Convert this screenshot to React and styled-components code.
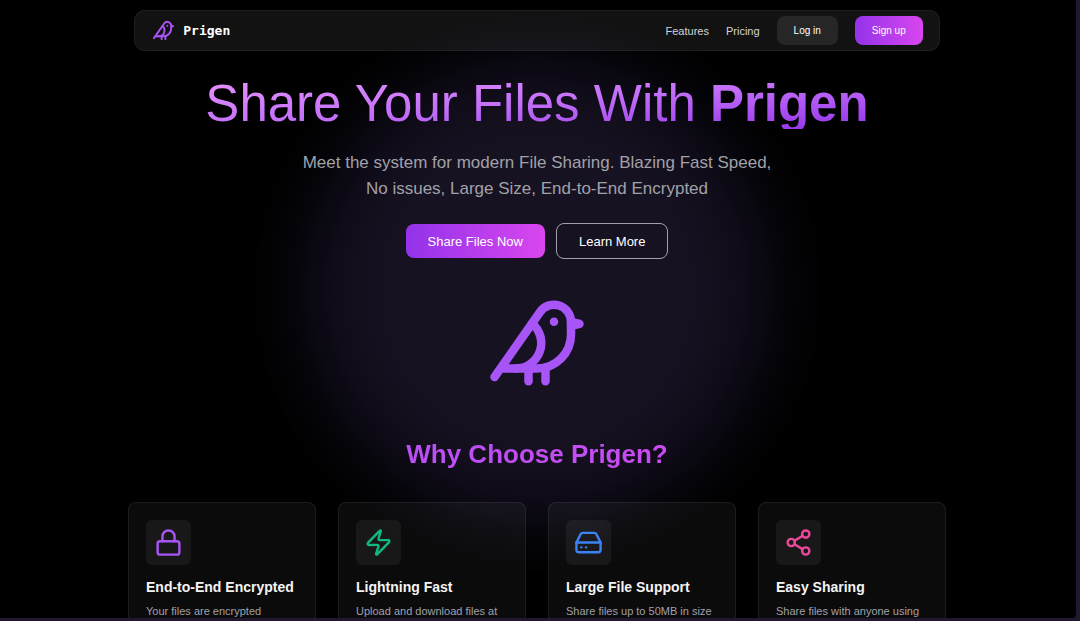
import React from "react";
import styled, { createGlobalStyle } from "styled-components";
import { Bird, HardDrive, Lock, Share2, Zap } from "lucide-react";

const features = [
  {
    title: "End-to-End Encrypted",
    text: "Your files are encrypted",
    icon: Lock,
    color: "#a855f7",
  },
  {
    title: "Lightning Fast",
    text: "Upload and download files at",
    icon: Zap,
    color: "#10b981",
  },
  {
    title: "Large File Support",
    text: "Share files up to 50MB in size",
    icon: HardDrive,
    color: "#3b82f6",
  },
  {
    title: "Easy Sharing",
    text: "Share files with anyone using",
    icon: Share2,
    color: "#ec4899",
  },
];

export default function App() {
  return (
    <Frame>
      <GlobalStyle />
      <Screen>
        <Navbar>
          <Brand href="#">
            <Bird size={23} color="#a855f7" />
            <span>Prigen</span>
          </Brand>
          <NavLinks>
            <NavLink href="#features">Features</NavLink>
            <NavLink href="#pricing">Pricing</NavLink>
            <NavButton type="button">Log in</NavButton>
            <NavButton type="button" $primary>
              Sign up
            </NavButton>
          </NavLinks>
        </Navbar>

        <Hero>
          <h1>
            Share Your Files With <strong>Prigen</strong>
          </h1>
          <p>
            Meet the system for modern File Sharing. Blazing Fast Speed, No
            issues, Large Size, End-to-End Encrypted
          </p>
          <Actions>
            <ActionButton type="button" $primary>
              Share Files Now
            </ActionButton>
            <ActionButton type="button">Learn More</ActionButton>
          </Actions>
          <Bird size={102} color="#a855f7" />
        </Hero>

        <Features id="features">
          <h2>Why Choose Prigen?</h2>
          <CardGrid>
            {features.map(({ title, text, icon: Icon, color }) => (
              <Card key={title}>
                <IconBox>
                  <Icon size={29} color={color} />
                </IconBox>
                <h3>{title}</h3>
                <p>{text}</p>
              </Card>
            ))}
          </CardGrid>
        </Features>
      </Screen>
    </Frame>
  );
}

const GlobalStyle = createGlobalStyle`
  *, *::before, *::after {
    box-sizing: border-box;
  }
  body {
    margin: 0;
    background-color: #21182f;
    font-family: "Liberation Sans", Arial, sans-serif;
  }
  h1, h2, h3, p {
    margin: 0;
  }
  button {
    font-family: inherit;
    cursor: pointer;
  }
`;

const Frame = styled.div`
  height: 100vh;
  padding: 0 4px 3px 0;
  background-color: #21182f;
`;

const Screen = styled.div`
  height: 100%;
  padding: 10px 2px 0 0;
  display: flex;
  flex-direction: column;
  align-items: center;
  overflow: hidden;
  border-bottom-right-radius: 4px;
  background: radial-gradient(
      circle at 50% 290px,
      #171221 0,
      #171221 145px,
      #130f1d 180px,
      #0f0b18 206px,
      #0a0811 226px,
      #050409 248px,
      #020204 268px,
      #010102 282px,
      #000000 284px
    )
    #000000;
`;

const Navbar = styled.nav`
  width: 75%;
  max-width: 1130px;
  padding: 5px 16px 5px 17px;
  display: flex;
  align-items: center;
  justify-content: space-between;
  flex-shrink: 0;
  background-color: #ffffff12;
  border: 1px solid #ffffff0d;
  border-radius: 11px;
`;

const Brand = styled.a`
  display: flex;
  align-items: center;
  gap: 8px;
  color: #ffffff;
  font-family: "DejaVu Sans Mono", monospace;
  font-size: 13px;
  font-weight: 700;
  text-decoration: none;
`;

const NavLinks = styled.div`
  display: flex;
  align-items: center;
  gap: 17px;
`;

const NavLink = styled.a`
  color: #d4d4d8;
  font-size: 11px;
  text-decoration: none;
`;

const NavButton = styled.button`
  height: 29px;
  padding: 0 17px;
  border: none;
  border-radius: 8px;
  color: #ffffff;
  font-size: 10px;
  background: ${({ $primary }) =>
    $primary ? "linear-gradient(to right, #9333ea, #d946ef)" : "#262626"};
`;

const Hero = styled.section`
  padding-top: 27px;
  display: flex;
  flex-direction: column;
  align-items: center;
  flex-shrink: 0;
  text-align: center;
  h1 {
    font-size: 51px;
    line-height: 51px;
    font-weight: 400;
    color: transparent;
    background: linear-gradient(to bottom right, #e894ff, #c26ef9, #9333ea);
    background-clip: text;
    -webkit-background-clip: text;
  }
  p {
    max-width: 480px;
    margin-top: 21px;
    color: #a1a1aa;
    font-size: 17px;
    line-height: 26px;
  }
  > svg {
    margin-top: 33px;
  }
`;

const Actions = styled.div`
  margin-top: 21px;
  display: flex;
  align-items: center;
  gap: 11px;
`;

const ActionButton = styled.button`
  height: ${({ $primary }) => ($primary ? "34px" : "36px")};
  padding: 0 22px;
  border: ${({ $primary }) => ($primary ? "none" : "1px solid #a1a1aa")};
  border-radius: 8px;
  color: #ffffff;
  font-size: 13px;
  background: ${({ $primary }) =>
    $primary ? "linear-gradient(to right, #9333ea, #d946ef)" : "transparent"};
`;

const Features = styled.section`
  width: 100%;
  max-width: 818px;
  padding-top: 45px;
  h2 {
    color: transparent;
    font-size: 26px;
    line-height: 30px;
    font-weight: 700;
    text-align: center;
    background: linear-gradient(to right, #a855f7, #d946ef);
    background-clip: text;
    -webkit-background-clip: text;
  }
`;

const CardGrid = styled.div`
  margin-top: 33px;
  display: grid;
  grid-template-columns: repeat(4, 1fr);
  gap: 22px;
`;

const Card = styled.article`
  min-height: 160px;
  padding: 17px;
  background-color: #ffffff0b;
  border: 1px solid #ffffff12;
  border-radius: 8px;
  h3 {
    margin-top: 12px;
    color: #f4f4f5;
    font-size: 14px;
    line-height: 20px;
    white-space: nowrap;
  }
  p {
    margin-top: 5px;
    color: #a1a1aa;
    font-size: 11px;
    line-height: 18px;
    white-space: nowrap;
  }
`;

const IconBox = styled.div`
  width: 45px;
  height: 45px;
  display: grid;
  place-items: center;
  background-color: #ffffff0e;
  border-radius: 6px;
`;
